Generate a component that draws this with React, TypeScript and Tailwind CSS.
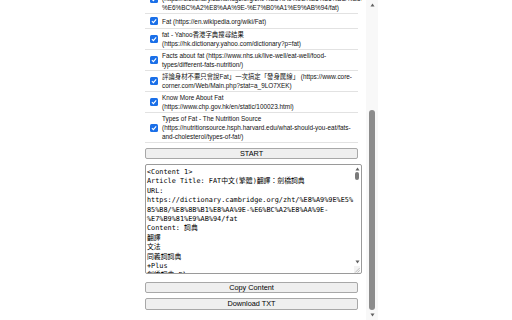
import React from 'react';

const items = [
  {
    title: 'FAT中文(簡體)翻譯：劍橋詞典',
    url: 'https://dictionary.cambridge.org/zht/%E8%A9%9E%E5%85%B8/%E8%8B%B1%E8%AA%9E-%E6%BC%A2%E8%AA%9E-%E7%B0%A1%E9%AB%94/fat',
  },
  { title: 'Fat', url: 'https://en.wikipedia.org/wiki/Fat' },
  { title: 'fat - Yahoo香港字典搜尋結果', url: 'https://hk.dictionary.yahoo.com/dictionary?p=fat' },
  { title: 'Facts about fat', url: 'https://www.nhs.uk/live-well/eat-well/food-types/different-fats-nutrition/' },
  { title: '評論身材不要只會說Fat」一次搞定「發身厲線」', url: 'https://www.core-corner.com/Web/Main.php?stat=a_9LO7XEK' },
  { title: 'Know More About Fat', url: 'https://www.chp.gov.hk/en/static/100023.html' },
  {
    title: 'Types of Fat - The Nutrition Source',
    url: 'https://nutritionsource.hsph.harvard.edu/what-should-you-eat/fats-and-cholesterol/types-of-fat/',
  },
];

const content = `<Content 1>
Article Title: FAT中文(繁體)翻譯：劍橋詞典
URL:
https://dictionary.cambridge.org/zht/%E8%A9%9E%E5%85%B8/%E8%8B%B1%E8%AA%9E-%E6%BC%A2%E8%AA%9E-%E7%B9%81%E9%AB%94/fat
Content: 詞典
翻譯
文法
同義詞詞典
+Plus
劍橋詞典+Plus
登入
註冊`;

function Check() {
  return (
    <span className="flex h-[8px] w-[8px] shrink-0 items-center justify-center rounded-[1.5px] bg-[#1a6fe8]">
      <svg width="6" height="6" viewBox="0 0 10 10">
        <polyline points="1.5,5.2 4,7.6 8.6,2.4" fill="none" stroke="white" strokeWidth="1.9" />
      </svg>
    </span>
  );
}

function Arrow({ up, size = 5 }: { up?: boolean; size?: number }) {
  return (
    <svg width={size} height={size - 1} viewBox="0 0 10 8" className="mx-auto shrink-0">
      {up ? <polygon points="5,1 9,7 1,7" fill="#606060" /> : <polygon points="1,1 9,1 5,7" fill="#606060" />}
    </svg>
  );
}

const btn =
  'flex h-[11px] w-[213px] shrink-0 items-center justify-center rounded-[2px] border border-[#a8a8a8] bg-[#efefef] text-[7.3px] leading-none text-black';

export default function App() {
  return (
    <div className="flex h-[320px] w-[512px] bg-white font-['Liberation_Sans','Noto_Sans_CJK_TC',sans-serif]">
      <div className="ml-[145px] flex h-[320px] w-[217px] flex-col justify-end overflow-hidden pb-[10px]">
        <div className="flex w-[213px] shrink-0 flex-col">
          {items.map((it, i) => (
            <div key={i} className="flex min-h-[15px] shrink-0 items-center border-b border-[#e2e2e2] py-px">
              <span className="ml-[5px]">
                <Check />
              </span>
              <p className="ml-[4px] w-[192px] text-[6.4px] leading-[9px] text-[#111]">
                {it.title} ({it.url})
              </p>
            </div>
          ))}
        </div>

        <button className={`${btn} mt-[5px]`}>START</button>

        <div className="mt-[5px] flex h-[110px] w-[217px] shrink-0 rounded-[2px] border border-[#9a9a9a] bg-white">
          <div className="w-[208px] overflow-hidden whitespace-pre-wrap break-words pl-[1px] pt-[3px] font-['DejaVu_Sans_Mono','Noto_Sans_CJK_TC',monospace] text-[6.85px] leading-[9.4px] text-black">
            {content}
          </div>
          <div className="flex w-[6px] flex-col pt-[2px]">
            <Arrow up size={5} />
            <div className="mx-auto mt-[1px] h-[8px] w-[4px] rounded-full bg-[#7a7a7a]" />
            <div className="flex-1" />
            <Arrow size={5} />
            <svg width="6" height="7" viewBox="0 0 6 7" className="mt-[2px]">
              <rect x="0" y="0" width="6" height="7" fill="#f3f3f3" />
              <line x1="5.7" y1="2" x2="1.2" y2="6.5" stroke="#9a9a9a" strokeWidth="0.6" />
              <line x1="5.7" y1="4.3" x2="3.5" y2="6.5" stroke="#9a9a9a" strokeWidth="0.6" />
            </svg>
          </div>
        </div>

        <button className={`${btn} mt-[8px]`}>Copy Content</button>
        <button className={`${btn} mt-[5px] h-[12px]`}>Download TXT</button>
      </div>

      <div className="ml-[4px] flex h-[320px] w-[12px] flex-col bg-[#f8f8f8] pt-[3px]">
        <Arrow up size={5} />
        <div className="flex-1" />
        <div className="mx-auto h-[200px] w-[6px] rounded-full bg-[#8c8c8c]" />
        <div className="flex h-[10px] items-center">
          <Arrow size={5} />
        </div>
      </div>
    </div>
  );
}
